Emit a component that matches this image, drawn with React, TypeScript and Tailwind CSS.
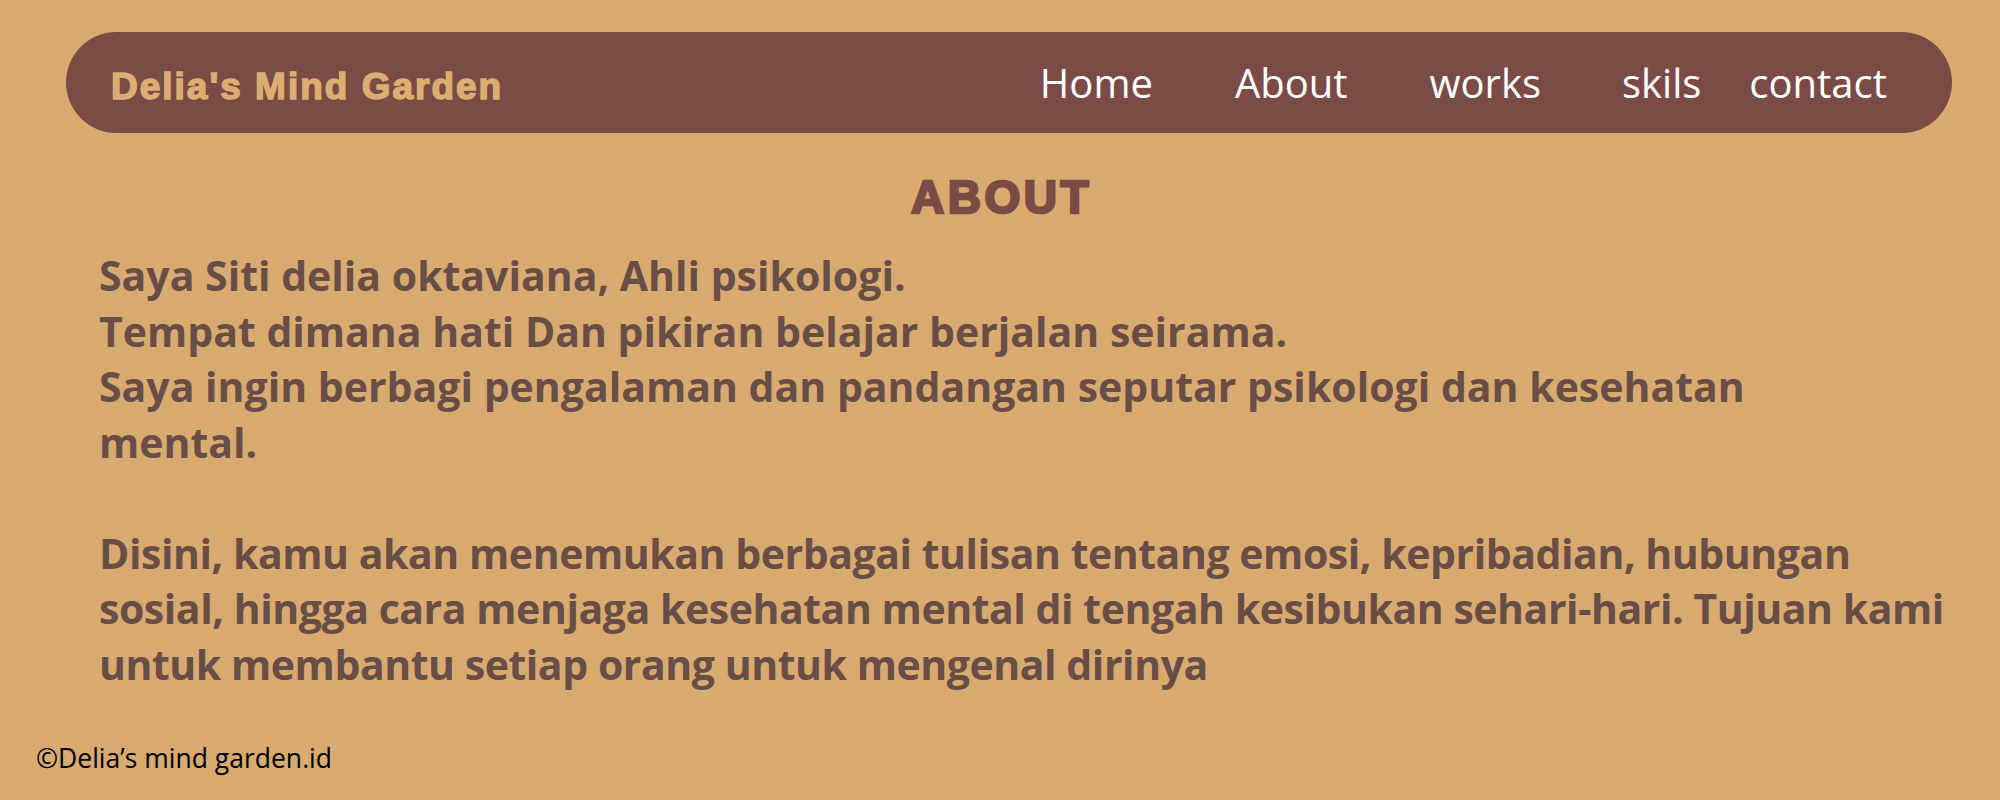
import React from 'react'

const links = [
    { label: 'Home', cls: '' },
    { label: 'About', cls: 'ml-[82px]' },
    { label: 'works', cls: 'ml-[82px]' },
    { label: 'skils', cls: 'ml-[81px]' },
    { label: 'contact', cls: 'ml-[48px]' },
]

const intro = [
    'Saya Siti delia oktaviana, Ahli psikologi.',
    'Tempat dimana hati Dan pikiran belajar berjalan seirama.',
    'Saya ingin berbagi pengalaman dan pandangan seputar psikologi dan kesehatan',
    'mental.',
]

const story = [
    'Disini, kamu akan menemukan berbagai tulisan tentang emosi, kepribadian, hubungan',
    'sosial, hingga cara menjaga kesehatan mental di tengah kesibukan sehari-hari. Tujuan kami',
    'untuk membantu setiap orang untuk mengenal dirinya',
]

const App = () => {
    return (
        <div className="min-h-[800px] w-full bg-[#d8aa6f] flex flex-col overflow-hidden">
            <nav className="mt-[32px] ml-[66px] mr-[48px] h-[101px] rounded-full bg-[#7b4b45] flex items-center justify-between pl-[45px] pr-[65px]">
                <span className="mt-[8px] text-[37px] font-bold tracking-[2px] text-[#dbad72] [-webkit-text-stroke:1.5px_#dbad72] font-['Liberation_Sans',Arial,sans-serif]">
                    Delia's Mind Garden
                </span>
                <ul className="flex items-center">
                    {links.map((link) => (
                        <li key={link.label} className={`${link.cls} text-[40px] leading-none text-white font-['Open_Sans',sans-serif]`}>
                            <a href="#">{link.label}</a>
                        </li>
                    ))}
                </ul>
            </nav>

            <h1 className="mt-[41px] text-center text-[46px] leading-none font-bold tracking-[3.5px] pl-[3px] text-[#7b4b45] [-webkit-text-stroke:2.5px_#7b4b45] font-['Liberation_Sans',Arial,sans-serif]">
                ABOUT
            </h1>

            <div className="mt-[28px] pl-[99px] text-[41px] leading-[55.5px] font-bold text-[#694e48] font-['Open_Sans',sans-serif]">
                <p>
                    {intro.map((line) => (
                        <span key={line} className="block whitespace-nowrap">{line}</span>
                    ))}
                </p>
                <br />
                <p>
                    {story.map((line) => (
                        <span key={line} className="block whitespace-nowrap tracking-[-0.45px]">{line}</span>
                    ))}
                </p>
            </div>

            <footer className="mt-[47px] pl-[36px] text-[26.5px] text-black font-['Open_Sans',sans-serif]">
                ©Delia’s mind garden.id
            </footer>
        </div>
    )
}

export default App
